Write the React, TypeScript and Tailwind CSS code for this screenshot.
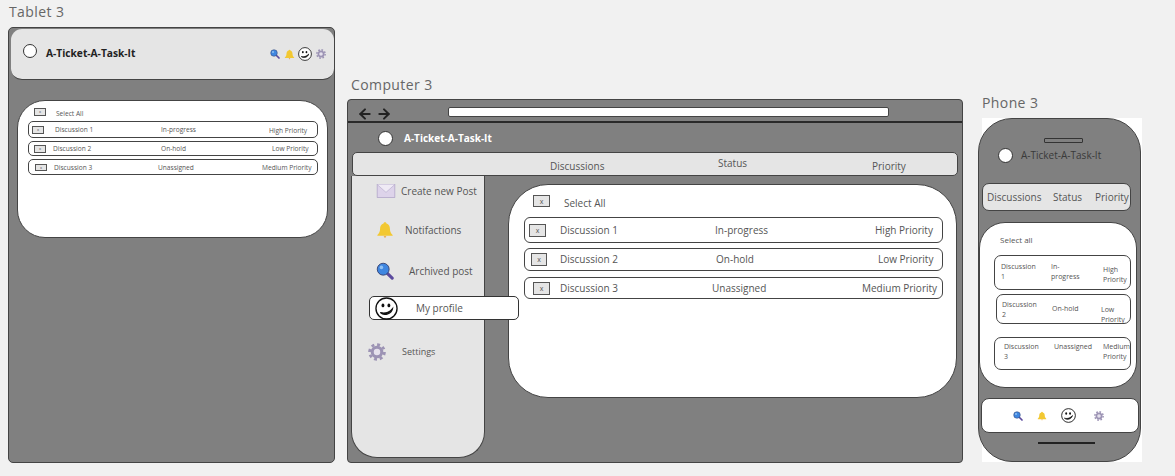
import { ArrowLeft, ArrowRight } from 'lucide-react'

function Search({ className }: { className: string }) {
  return (
    <svg viewBox="0 0 20 20" className={className}>
      <path d="M12 12 L18 18" stroke="#5b4a9e" strokeWidth="3.4" strokeLinecap="round" />
      <circle cx="8" cy="8" r="6.6" fill="#3f86e0" stroke="#34406f" strokeWidth="1" />
      <circle cx="6" cy="6" r="2" fill="#8fc0f2" />
    </svg>
  )
}

function BellIcon({ className }: { className: string }) {
  return (
    <svg viewBox="0 0 20 20" className={className}>
      <path
        d="M10 1.5c.9 0 1.5.6 1.6 1.4C14.300 3.700 15.500 6 15.500 9c0 3 1 4.800 3 6.500v.8h-17v-.8c2-1.700 3-3.500 3-6.500 0-3 1.200-5.300 3.900-6.100.1-.8.700-1.400 1.600-1.400z"
        fill="#f2c832"
      />
      <path d="M8.500 17h3L10 19z" fill="#e89a2c" />
    </svg>
  )
}

function Smile({ className }: { className: string }) {
  return (
    <svg viewBox="0 0 24 24" className={className}>
      <circle cx="12" cy="12" r="11" fill="#fff" stroke="#111" strokeWidth="1.4" />
      <ellipse cx="8.300" cy="8.800" rx="1.500" ry="2" fill="#111" />
      <ellipse cx="14.500" cy="8.800" rx="1.500" ry="2" fill="#111" />
      <path d="M5.500 16.300c4 1.100 9 .4 12.800-4.200-.8 5-8.300 8.200-12.800 4.200z" fill="#111" stroke="#111" strokeWidth="1.200" />
    </svg>
  )
}

function Gear({ className }: { className: string }) {
  return (
    <svg viewBox="0 0 20 20" className={className}>
      <circle cx="10" cy="10" r="8.300" fill="none" stroke="#9c93b4" strokeWidth="3" strokeDasharray="3.300 3.200" />
      <circle cx="10" cy="10" r="5.300" fill="#e5e1ec" stroke="#9c93b4" strokeWidth="3.400" />
    </svg>
  )
}

function Mail({ className }: { className: string }) {
  return (
    <svg viewBox="0 0 20 15" className={className}>
      <rect x="0.500" y="0.500" width="19" height="14" fill="#ddd3ea" stroke="#a89cc2" strokeWidth="0.7" />
      <path d="M0.500 0.500 L10 9 L19.500 0.500" fill="#efeaf5" stroke="#b5aacb" strokeWidth="0.7" />
    </svg>
  )
}

function Box({ className }: { className: string }) {
  return (
    <div className={`flex shrink-0 items-center justify-center border border-[#555] bg-[#e5e5e5] font-['Open_Sans',sans-serif] text-[#555] ${className}`}>
      x
    </div>
  )
}

function Tablet() {
  return (
    <div className="absolute left-[8px] top-0 w-[327px]">
      <div className="ml-[1px] h-[27px] text-[14px] leading-[23px] tracking-[0.4px] text-[#666]">Tablet 3</div>
      <div className="h-[436px] rounded-[5px] border border-[#444] bg-[#808080] pl-[2px] pt-[1px]">
        <div className="flex h-[51px] w-[323px] items-center rounded-[11px] border-b border-[#444] bg-[#e5e5e5] pl-[12px]">
          <div className="mb-[6px] h-[14px] w-[14px] rounded-full border border-[#333] bg-white" />
          <div className="ml-[9px] w-[89px] whitespace-nowrap text-[10.200px] font-bold text-[#222]">A-Ticket-A-Task-It</div>
          <Search className="ml-[135px] h-[10px] w-[10px]" />
          <BellIcon className="ml-[4px] h-[11px] w-[11px]" />
          <Smile className="ml-[3px] h-[14px] w-[14px]" />
          <Gear className="ml-[4px] h-[10px] w-[10px]" />
        </div>
        <div className="ml-[6px] mt-[20px] h-[138px] w-[311px] rounded-[28px] border border-[#444] bg-white pl-[10px] pt-[6px] text-[6.600px] text-[#555]">
          <div className="flex h-[14px] items-center">
            <Box className="ml-[6px] mb-[4px] h-[8px] w-[12px] text-[4px] leading-none" />
            <span className="ml-[10px]">Select All</span>
          </div>
          <div className="flex h-[17px] w-[290px] items-center rounded-[5px] border border-[#444] pl-[3px] pt-[1px]">
            <Box className="h-[8px] w-[12px] text-[4px] leading-none" />
            <span className="ml-[11px] w-[106px]">Discussion 1</span>
            <span className="w-[108px]">In-progress</span>
            <span className="mt-[1px]">High Priority</span>
          </div>
          <div className="mt-[3px] flex h-[15px] w-[290px] items-center rounded-[5px] border border-[#444] pl-[5px]">
            <Box className="h-[8px] w-[12px] text-[4px] leading-none" />
            <span className="ml-[7px] w-[108px]">Discussion 2</span>
            <span className="w-[111px]">On-hold</span>
            <span>Low Priority</span>
          </div>
          <div className="mt-[3px] flex h-[16px] w-[290px] items-center rounded-[5px] border border-[#444] pl-[6px] pt-[1px]">
            <Box className="h-[7px] w-[12px] text-[4px] leading-none" />
            <span className="ml-[7px] w-[104px]">Discussion 3</span>
            <span className="w-[104px]">Unassigned</span>
            <span>Medium Priority</span>
          </div>
        </div>
      </div>
    </div>
  )
}

function Computer() {
  return (
    <div className="absolute left-[347px] top-[76px] w-[616px]">
      <div className="ml-[4px] h-[23px] text-[14px] leading-[18px] tracking-[0.4px] text-[#666]">Computer 3</div>
      <div className="h-[364px] rounded-[4px] border border-[#444] bg-[#808080]">
        <div className="flex h-[23px] items-start border-b-2 border-[#2a2a2a]">
          <ArrowLeft className="ml-[9px] mt-[6px] h-[16px] w-[16px] text-[#222]" strokeWidth={3} />
          <ArrowRight className="ml-[3px] mt-[6px] h-[16px] w-[16px] text-[#222]" strokeWidth={3} />
          <div className="ml-[56px] mt-[7px] h-[10px] w-[441px] rounded-[2px] border border-[#444] bg-white" />
        </div>
        <div className="flex h-[29px] items-center pl-[30px] pt-[2px]">
          <div className="h-[15px] w-[15px] rounded-full border border-[#333] bg-white" />
          <div className="ml-[11px] text-[10px] font-bold text-white">A-Ticket-A-Task-It</div>
        </div>
        <div className="ml-[4px] flex h-[24px] w-[606px] items-center rounded-[5px] border border-[#444] bg-[#e5e5e5] text-[10px] text-[#555]">
          <span className="ml-[197px] mt-[5px] w-[168px]">Discussions</span>
          <span className="mb-[2px] w-[154px]">Status</span>
          <span className="mt-[4px]">Priority</span>
        </div>
        <div className="flex">
          <div className="ml-[3px] h-[282px] w-[134px] shrink-0 rounded-b-[26px] border-b border-l border-r border-[#444] bg-[#e5e5e5] text-[#555]">
            <div className="flex h-[30px] items-center pb-[1px] pl-[24px] pt-[1px]">
              <Mail className="h-[14px] w-[20px]" />
              <span className="ml-[5px] text-[10px]">Create new Post</span>
            </div>
            <div className="mt-[9px] flex h-[30px] items-center pl-[24px]">
              <BellIcon className="h-[18px] w-[18px]" />
              <span className="ml-[11px] text-[10px]">Notifactions</span>
            </div>
            <div className="mt-[11px] flex h-[30px] items-center pl-[24px]">
              <Search className="h-[18px] w-[18px]" />
              <span className="ml-[15px] text-[10px]">Archived post</span>
            </div>
            <div className="relative z-10 ml-[17px] mt-[10px] flex h-[24px] w-[150px] items-center rounded-[5px] border border-[#333] bg-white pl-[5px]">
              <Smile className="h-[23px] w-[23px]" />
              <span className="ml-[18px] text-[10px]">My profile</span>
            </div>
            <div className="mt-[22px] flex h-[20px] items-center pl-[16px]">
              <Gear className="h-[18px] w-[18px]" />
              <span className="ml-[16px] text-[9px]">Settings</span>
            </div>
          </div>
          <div className="ml-[23px] mt-[8px] h-[214px] w-[449px] rounded-[40px] border border-[#444] bg-white pl-[15px] text-[10px] text-[#555]">
            <div className="flex h-[32px] items-center pb-[1px]">
              <Box className="ml-[9px] mt-[1px] h-[12px] w-[17px] text-[7px] leading-none" />
              <span className="ml-[14px] mt-[5px]">Select All</span>
            </div>
            <div className="flex h-[26px] w-[419px] items-center rounded-[6px] border border-[#444] pl-[4px]">
              <Box className="h-[13px] w-[17px] text-[7px] leading-none" />
              <span className="ml-[14px] w-[155px]">Discussion 1</span>
              <span className="w-[160px]">In-progress</span>
              <span>High Priority</span>
            </div>
            <div className="mt-[5px] flex h-[23px] w-[419px] items-center rounded-[6px] border border-[#444] pl-[6px]">
              <Box className="h-[13px] w-[16px] text-[7px] leading-none" />
              <span className="ml-[13px] w-[156px]">Discussion 2</span>
              <span className="w-[162px]">On-hold</span>
              <span>Low Priority</span>
            </div>
            <div className="mt-[6px] flex h-[22px] w-[419px] items-center rounded-[6px] border border-[#444] pl-[8px]">
              <Box className="h-[13px] w-[17px] text-[7px] leading-none" />
              <span className="ml-[10px] w-[152px]">Discussion 3</span>
              <span className="w-[150px]">Unassigned</span>
              <span>Medium Priority</span>
            </div>
          </div>
        </div>
      </div>
    </div>
  )
}

function Phone() {
  return (
    <div className="absolute left-[978px] top-[94px] w-[164px]">
      <div className="ml-[4px] h-[24px] text-[14px] leading-[18px] tracking-[0.4px] text-[#666]">Phone 3</div>
      <div className="ml-[4px] h-[344px] w-[160px] bg-white">
        <div className="-ml-[4px] h-[344px] w-[163px] rounded-[34px] border border-[#444] bg-[#808080]">
          <div className="ml-[65px] mt-[19px] h-[5px] w-[39px] rounded-[1px] border border-[#333]" />
          <div className="ml-[19px] mt-[4px] flex h-[16px] items-center">
            <div className="h-[15px] w-[15px] rounded-full border border-[#333] bg-white" />
            <div className="ml-[8px] text-[10px] text-[#3a3a3a]">A-Ticket-A-Task-It</div>
          </div>
          <div className="ml-[3px] mt-[20px] flex h-[28px] w-[149px] items-center rounded-[7px] border border-[#444] bg-[#e5e5e5] pl-[4px] text-[10px] text-[#555]">
            <span className="w-[66px]">Discussions</span>
            <span className="w-[42px]">Status</span>
            <span>Priority</span>
          </div>
          <div className="mt-[11px] h-[166px] w-[158px] rounded-[26px] border border-[#444] bg-white text-[7px] leading-[10px] text-[#555]">
            <div className="pl-[20px] pt-[12px] text-[8px] leading-[10px]">Select all</div>
            <div className="ml-[14px] mt-[10px] flex h-[35px] w-[137px] rounded-[7px] border border-[#444] pl-[6px] pt-[6px]">
              <span className="w-[50px]">Discussion<br />1</span>
              <span className="w-[52px]">In-<br />progress</span>
              <span className="mt-[3px]">High<br />Priority</span>
            </div>
            <div className="ml-[16px] mt-[4px] flex h-[30px] w-[135px] rounded-[7px] border border-[#444] pl-[5px] pt-[5px]">
              <span className="w-[50px]">Discussion<br />2</span>
              <span className="mt-[4px] w-[49px]">On-hold</span>
              <span className="mt-[5px]">Low<br />Priority</span>
            </div>
            <div className="ml-[14px] mt-[13px] flex h-[33px] w-[137px] rounded-[7px] border border-[#444] pl-[9px] pt-[4px]">
              <span className="w-[50px]">Discussion<br />3</span>
              <span className="w-[49px]">Unassigned</span>
              <span>Medium<br />Priority</span>
            </div>
          </div>
          <div className="ml-[2px] mt-[10px] flex h-[35px] w-[158px] items-center rounded-[8px] border border-[#444] bg-white pl-[31px]">
            <Search className="h-[10px] w-[10px]" />
            <BellIcon className="ml-[14px] h-[10px] w-[10px]" />
            <Smile className="ml-[14px] h-[15px] w-[15px]" />
            <Gear className="ml-[18px] h-[10px] w-[10px]" />
          </div>
          <div className="ml-[59px] mt-[9px] h-[2px] w-[57px] bg-[#222]" />
        </div>
      </div>
    </div>
  )
}

export default function App() {
  return (
    <div className="relative h-[476px] w-[1175px] overflow-hidden bg-[#f1f1f1] font-['Open_Sans',sans-serif]">
      <Tablet />
      <Computer />
      <Phone />
    </div>
  )
}
